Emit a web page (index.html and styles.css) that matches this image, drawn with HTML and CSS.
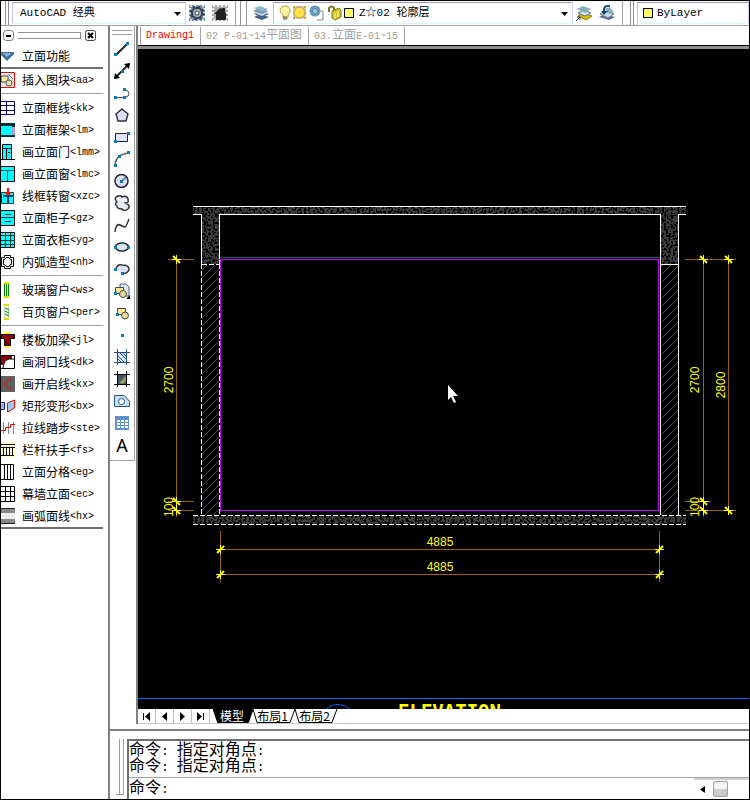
FILE: index.html
```html
<!DOCTYPE html>
<html lang="zh-CN">
<head>
<meta charset="utf-8">
<title>AutoCAD</title>
<link rel="stylesheet" href="styles.css">
</head>
<body>
<header class="topbar">
  <div class="group">
    <span class="grip"></span>
    <div class="combo workspace">
      <select aria-label="工作空间"><option>AutoCAD 经典</option></select>
      <svg class="arrow" width="7" height="4" viewBox="0 0 7 4"><path d="M0 0H7L3.500 4z"/></svg>
    </div>
    <button class="tool" aria-label="设置"><svg width="16" height="16"><path fill="#7394ad" d="M0 0h16v16H0z"/><path stroke="#d3e2e8" stroke-width="2" stroke-dasharray="2 2" d="M1 1h14v14H1z" fill="none"/><circle cx="8" cy="8" r="5" fill="none" stroke="#36414b" stroke-width="2"/><circle cx="8" cy="8" r="6" fill="none" stroke="#36414b" stroke-width="3" stroke-dasharray="2.300 2.410"/><circle cx="8" cy="8" r="4" fill="#9eb5c2"/><circle cx="8" cy="8" r="2" fill="#fff" stroke="#444"/></svg></button>
    <button class="tool" aria-label="我的工作空间"><svg width="16" height="16"><path fill="#a9aaaa" d="M0 0h16v16H0z"/><path stroke="#eee" stroke-width="2" stroke-dasharray="2 2" d="M1 1h14v14H1z" fill="none"/><path d="M2 9L8 3l2 1V3h3v4l2 3h-1v5H4V9z" fill="#222"/></svg></button>
  </div>
  <div class="group">
    <span class="grip wide"></span>
    <button class="tool" aria-label="图层特性"><svg width="16" height="16"><path d="M1 12l6-3 9 3-7 3zM1 9l6-3 9 3-7 3z" fill="#4b5e83"/><path d="M0 7l7-3 9 3-7 4z" fill="#d4e3ef"/><path d="M0 6l7-3 8 3-6 3z" fill="#6d93a9"/><path d="M1 3l6-2 8 3-6 3z" fill="#8db8c4"/></svg></button>
    <div class="combo layer">
      <select aria-label="图层"><option>Z☆02 轮廓层</option></select>
      <svg class="state" width="76" height="16"><path d="M4 10C-1 6 1 1 6 1s7 5 3 9v3H4z" fill="#fff3a0" stroke="#b99a30"/><path d="M4 12h4M4 14h4" stroke="#555"/><path d="M14 1h13v13H14z" fill="#b9d2e7"/><path d="M14 1h2v2h-2zM25 12h2v2h-2zM25 1h2v2h-2zM14 12h2v2h-2z" fill="#d6a919"/><circle cx="20.500" cy="7.500" r="5.500" fill="#ffe047" stroke="#d18e25"/><path d="M36 6h8v9h-6" fill="#fff" stroke="#888"/><circle cx="36" cy="6" r="5.500" fill="#6d9fbb"/><path d="M31 6h10M36 1v10M32 2l8 8M40 2l-8 8" stroke="#35688e" stroke-dasharray="1 1"/><circle cx="36" cy="6" r="2" fill="#a7cbd9"/><path d="M50 7V3q3-3 5 0v4" fill="none" stroke="#77751b" stroke-width="2"/><path d="M53 6l7-3 2 2v7l-6 3-3-2z" fill="#d6c52b" stroke="#827c16"/><path d="M56 8v6M59 6v6" stroke="#fff49b"/><path d="M65.500 3.500h9v9h-9z" fill="#ff6" stroke="#000"/></svg>
      <svg class="arrow" width="7" height="4" viewBox="0 0 7 4"><path d="M0 0H7L3.500 4z"/></svg>
    </div>
    <button class="tool" aria-label="置为当前图层"><svg width="16" height="16"><path d="M2 11l5-3 9 3-6 4z" fill="#d8bd10" stroke="#8d7600"/><path d="M2 8l6-3 7 3-6 3z" fill="#d5e4ed" stroke="#59738a"/><path d="M1 4l6-3 8 3-6 4z" fill="#87afbb"/><path d="M0 16l4-4M1 12h3v3" stroke="#123e66" fill="none"/></svg></button>
    <button class="tool" aria-label="上一个图层"><svg width="16" height="16"><path d="M0 12l6-3 10 3-6 3z" fill="#587096"/><path d="M1 9l6-3 8 3-6 4z" fill="#c9dbe8" stroke="#59738a"/><path d="M6 4l4-2 5 5-5 2z" fill="#87afbb"/><path d="M11 1Q4 0 5 7" stroke="#16436a" stroke-width="2" fill="none"/><path d="M2 6h7l-4 4z" fill="#16436a"/></svg></button>
  </div>
  <div class="group last">
    <span class="grip"></span>
    <div class="combo color">
      <select aria-label="颜色"><option>ByLayer</option></select>
      <span class="swatch"></span>
    </div>
  </div>
</header>

<div class="workarea">
  <aside class="palette">
    <div class="palette-head">
      <button aria-label="折叠"><svg width="11" height="11"><rect x=".5" y=".5" width="10" height="10" rx="3" fill="#fff" stroke="#777"/><path d="M3 5h5v2H3z"/></svg></button>
      <span class="bars"></span>
      <button aria-label="关闭"><svg width="11" height="11"><rect x=".5" y=".5" width="10" height="10" rx="2" fill="#fff" stroke="#444"/><path d="M3 3l5 5M8 3L3 8" stroke="#000" stroke-width="2"/></svg></button>
    </div>
    <button class="item"><svg width="14" height="16"><path d="M0 4h13v2L6 13 0 7z" fill="#426b9c"/><path d="M1 5h10L6 9z" fill="#86aed1"/></svg>立面功能</button>
    <hr class="strong">
    <button class="item"><svg width="14" height="16"><path d="M-1 .5h14.500v15H-1" fill="#dce6ed" stroke="red"/><path d="M0 4h7v6H0z" fill="#ffe69a" stroke="#555"/><circle cx="8" cy="11" r="3" fill="#f5e7a2" stroke="#555"/><path d="M7 2l5 5" stroke="#789"/></svg>插入图块<code>&lt;aa&gt;</code></button>
    <hr>
    <button class="item"><svg width="14" height="16"><path d="M0 1.500h13.500v13H0M0 5.500h13M0 10.500h13M5.500 1v14" fill="none" stroke="#00008b"/></svg>立面框线<code>&lt;kk&gt;</code></button>
    <button class="item"><svg width="14" height="16"><path d="M0 1h14v14H0z" fill="#033"/><path d="M0 4h11v9H0z" fill="#0ff"/><path d="M11 5h3v8h-3z" fill="#a9a2e8"/></svg>立面框架<code>&lt;lm&gt;</code></button>
    <button class="item"><svg width="14" height="16"><path d="M1.500 .5h9v15h-9z" fill="#0ff" stroke="#000"/><path d="M2 4.500h9M5.500 4v11M0 15.500h14M7 8.500h2" stroke="#000"/></svg>画立面门<code>&lt;lmm&gt;</code></button>
    <button class="item"><svg width="14" height="16"><path d="M0 .5h13.500v15H0" fill="#0ff" stroke="#000"/><path d="M0 4.500h13M6.500 4v11" stroke="#055"/></svg>画立面窗<code>&lt;lmc&gt;</code></button>
    <button class="item"><svg width="14" height="16"><path d="M.5 4.500h12v11H.5z" fill="#0ff" stroke="#046"/><path d="M2 8h10M7 5v10" stroke="#046" stroke-width="2"/><path d="M6 0h2v4h3L7 8 3 4h3z" fill="red"/></svg>线框转窗<code>&lt;xzc&gt;</code></button>
    <button class="item"><svg width="14" height="16"><path d="M0 .5h13.500v15H0" fill="#0ff" stroke="#000"/><path d="M0 7.500h14M4 4.500h6M4 11.500h6" stroke="#033"/></svg>立面柜子<code>&lt;gz&gt;</code></button>
    <button class="item"><svg width="14" height="16"><path d="M0 .5h13.500v15H0" fill="#0ff" stroke="#000"/><path d="M0 3.500h14M0 8.500h14M0 12.500h14M4.500 0v16M9.500 0v16" stroke="#033"/></svg>立面衣柜<code>&lt;yg&gt;</code></button>
    <button class="item"><svg width="14" height="16"><path d="M3.500 1.500h6v2h3v9h-3v2h-6v-2h-3v-9h3z" fill="#fff" stroke="#000"/><path d="M5 3.500h3q0 2 2.500 2v5q-2.500 0-2.500 2H5q0-2-2.500-2v-5q2.500 0 2.500-2z" fill="#fff" stroke="#000"/></svg>内弧造型<code>&lt;nh&gt;</code></button>
    <hr>
    <button class="item"><svg width="14" height="16"><path d="M3.500 2v12M5.500 2v12M7.500 2v12" stroke="#080"/><path d="M3 0h5v2H3zM3 14h5v2H3z" fill="#dd0"/></svg>玻璃窗户<code>&lt;ws&gt;</code></button>
    <button class="item"><svg width="14" height="16"><path d="M3.500 1v14M7.500 1v14" stroke="#bfdabf"/><path d="M4 4l4 2M4 7l4 2M4 10l4 2" stroke="#080"/><path d="M3 0h5v2H3zM3 14h5v2H3z" fill="#dd0"/></svg>百页窗户<code>&lt;per&gt;</code></button>
    <hr>
    <button class="item"><svg width="14" height="16"><path d="M0 2.500h13.500v4H9.500v7h-6v-7H0z" fill="#900000" stroke="#000"/><path d="M3 0h6v2H3zM4 14h4v2H4z" fill="#ff0"/></svg>楼板加梁<code>&lt;jl&gt;</code></button>
    <button class="item"><svg width="14" height="16"><path d="M0 1.500h13.500v13H0" fill="#fff" stroke="#000"/><path d="M0 2h11v3H7L4 7 2 11H0z" fill="#900000"/><path d="M13 5H8Q3 6 2 14" fill="none" stroke="#000"/></svg>画洞口线<code>&lt;dk&gt;</code></button>
    <button class="item"><svg width="14" height="16"><path d="M0 0h14v16H0z" fill="#606060"/><path d="M10 2L3 8l7 6" stroke="red" fill="none"/></svg>画开启线<code>&lt;kx&gt;</code></button>
    <button class="item"><svg width="14" height="16"><path d="M0 4.500h3.500v7H0" fill="#9be" stroke="#1616a8"/><path d="M6.500 5l7-3v8l-7 4z" fill="#9ce" stroke="red"/></svg>矩形变形<code>&lt;bx&gt;</code></button>
    <button class="item"><svg width="14" height="16"><path d="M2.500 2v12M7.500 2v12M12.500 2v12" stroke="#888"/><path d="M0 10.500h4.500v-3h5v-3H14" fill="none" stroke="red"/></svg>拉线踏步<code>&lt;ste&gt;</code></button>
    <button class="item"><svg width="14" height="16"><path d="M0 1h14v14H0z" fill="#ffffc8"/><path d="M0 2.500h14M0 5.500h14M0 13.500h13M2.500 5v9M5.500 5v9M8.500 5v9M11.500 5v9" stroke="#000"/></svg>栏杆扶手<code>&lt;fs&gt;</code></button>
    <button class="item"><svg width="14" height="16"><path d="M0 .5h12.500v15H0M3.500 0v16M6.500 0v16M9.500 0v16" fill="#fff" stroke="#000"/></svg>立面分格<code>&lt;eg&gt;</code></button>
    <button class="item"><svg width="14" height="16"><path d="M0 .5h13.500v15H0M0 5.500h14M0 10.500h14M4.500 0v16M9.500 0v16" fill="none" stroke="#000"/></svg>幕墙立面<code>&lt;ec&gt;</code></button>
    <button class="item"><svg width="14" height="16"><path d="M0 0h14v16H0z" fill="#888"/><path d="M0 5h14v6H0z" fill="#eee"/><path d="M0 .5h14M0 15.500h14" stroke="#222"/></svg>画弧面线<code>&lt;hx&gt;</code></button>
    <hr class="strong">
  </aside>

  <div class="right">
    <div class="upper">
      <nav class="draw" aria-label="绘图">
        <span class="draw-grip"></span>
        <button aria-label="直线"><svg width="16" height="16"><path d="M2 14L14 2" stroke="#222" stroke-width="2"/><path d="M0 12h3v3H0zM12 1h3v3h-3z" class="node"/></svg></button>
        <button aria-label="构造线"><svg width="16" height="16"><path d="M1 15L15 1" stroke="#222" stroke-width="2"/><path d="M0 16l1-6 5 5zM16 0l-6 1 5 5z"/><path d="M7 7h3v3H7z" class="node"/></svg></button>
        <button aria-label="多段线"><svg width="16" height="16"><path d="M1 12.500h10q4-1 4-4t-5-4" fill="none" stroke="#444"/><path d="M0 11h3v3H0zM9 11h3v3H9zM9 3h3v3H9z" class="node"/></svg></button>
        <button aria-label="多边形"><svg width="16" height="16"><path d="M8 2l6 5-2 7H4L2 7z" fill="#d9dff5" stroke="#334" stroke-width="1.500"/></svg></button>
        <button aria-label="矩形"><svg width="16" height="16"><path d="M1.500 4.500h12v8h-12z" fill="#dfe3fb" stroke="#222"/><path d="M0 11h3v3H0zM13 3h3v3h-3z" class="node"/></svg></button>
        <button aria-label="圆弧"><svg width="16" height="16"><path d="M1 14Q2 3 15 2" fill="none" stroke="#555" stroke-width="1.500"/><path d="M0 13h3v3H0zM4 4h3v3H4zM13 0h3v3h-3z" class="node"/></svg></button>
        <button aria-label="圆"><svg width="16" height="16"><circle cx="7.500" cy="8" r="6.500" fill="#dce0f5" stroke="#223" stroke-width="1.500"/><path d="M8 8l4-4" stroke="#27a" stroke-width="1.500"/><path d="M6 7h3v3H6z" class="node"/></svg></button>
        <button aria-label="修订云线"><svg width="16" height="16"><path d="M3 7Q-1 3 4 1q3-1 4 1 5-2 6 2t-2 4q5 3 2 6-4 3-6 0-5 0-5-3-3-2 0-4z" fill="#e8eaf6" stroke="#333" stroke-width="1.500"/></svg></button>
        <button aria-label="样条曲线"><svg width="16" height="16"><path d="M1 15Q2 6 6 8t5 2 4-8" fill="none" stroke="#333" stroke-width="1.500"/></svg></button>
        <button aria-label="椭圆"><svg width="16" height="16"><ellipse cx="8" cy="8" rx="6.500" ry="4" fill="#dde1f4" stroke="#222" stroke-width="1.500"/><path d="M0 7h3v3H0zM13 7h3v3h-3zM7 3h3v2H7zM7 11h3v2H7z" class="node"/></svg></button>
        <button aria-label="椭圆弧"><svg width="16" height="16"><path d="M2 8Q3 3 8 4q7 0 7 4t-7 5" fill="#dde1f4" stroke="#333" stroke-width="1.500"/><path d="M0 7h3v3H0zM7 11h3v3H7z" class="node"/></svg></button>
        <button aria-label="插入块"><svg width="16" height="16"><path d="M6 1h6l3 3v9H6z" fill="#d9e6f5" stroke="#567"/><path d="M1.500 4.500h8v6h-8z" fill="#ffeaa0" stroke="#543"/><circle cx="9" cy="11" r="3.500" fill="#e7dca0" stroke="#543"/><path d="M16 12v4h-4z"/><path d="M0 9h3v3H0z" class="node"/></svg></button>
        <button aria-label="创建块"><svg width="16" height="16"><path d="M3.500 3.500h8v6h-8z" fill="#ffeaa0" stroke="#543"/><circle cx="11" cy="10.500" r="3.500" fill="#e7dca0" stroke="#543"/><path d="M2 8h3v3H2z" class="node"/></svg></button>
        <button aria-label="点"><svg width="16" height="16"><path d="M7 7h3v3H7z" class="node"/></svg></button>
        <button aria-label="图案填充"><svg width="16" height="16"><path d="M4 4h9v9H4z" fill="#dce7ff"/><path d="M3 6l7 7M3 9l4 4M6 4l7 7M9 4l4 4M0 3.500h16M0 13.500h16M3.500 0v16M12.500 0v16" stroke="#234c89"/></svg></button>
        <button aria-label="渐变色"><svg width="16" height="16"><path d="M3 4h10v9H3z" fill="#456"/><path d="M5 12l8-8v5l-4 4z" fill="#a39a5c"/><path d="M0 3.500h16M0 13.500h16M3.500 0v16M12.500 0v16" stroke="#000" stroke-width="1"/></svg></button>
        <button aria-label="面域"><svg width="16" height="16"><path d="M.5 2.500h10l5 6v5H.5z" fill="#c8e1f5" stroke="#25548a"/><circle cx="7.500" cy="8.500" r="3" fill="#fff" stroke="#25548a"/></svg></button>
        <button aria-label="表格"><svg width="16" height="16"><path d="M1 1h14v14H1z" fill="#6190d0"/><path d="M3 5h3v2H3zM7 5h3v2H7zM11 5h3v2h-3zM3 8h3v2H3zM7 8h3v2H7zM11 8h3v2h-3zM3 11h3v2H3zM7 11h3v2H7zM11 11h3v2h-3z" fill="#fff"/></svg></button>
        <button class="letter" aria-label="多行文字">A</button>
      </nav>

      <main class="document">
        <div class="files">
          <button class="active">Drawing1</button>
          <button>02 P-01~14<span>平面图</span></button>
          <button>03.<span>立面</span>E-01~15</button>
        </div>
        <div class="canvas">
          <svg width="611" height="659" viewBox="138 50 611 659">
            <defs>
              <pattern id="hatch" width="8" height="8" patternUnits="userSpaceOnUse"><path d="M-1 9L9 -1M-1 1L1 -1M7 9L9 7" stroke="#444" stroke-width="1"/></pattern>
              <filter id="concrete" x="0" y="0" width="1" height="1" color-interpolation-filters="sRGB"><feTurbulence type="fractalNoise" baseFrequency=".45" numOctaves="1" seed="4"/><feColorMatrix values="0 0 0 0 .24  0 0 0 0 .24  0 0 0 0 .24  0 0 0 18 -8"/></filter>
              <g id="tick" stroke="#ff0"><path d="M-4 .5H5M.5 -4V5"/><path d="M-3 -3L4 4" stroke-width="2"/></g>
              <g id="tickb" stroke="#ff0"><path d="M-4 .5H5M.5 -4V5"/><path d="M-3 4L4 -3" stroke-width="2"/></g>
            </defs>
            <g filter="url(#concrete)"><path d="M193 207h493v7H193z"/></g>
            <g filter="url(#concrete)"><path d="M202 214h17v50h-17z"/></g>
            <g filter="url(#concrete)"><path d="M661 214h17v50h-17z"/></g>
            <g filter="url(#concrete)"><path d="M193 516h493v8H193z"/></g>
            <path d="M202 265h17v250h-17zM661 265h17v250h-17z" fill="url(#hatch)"/>
            <g fill="none" stroke="#fff" shape-rendering="crispEdges">
              <path d="M193 206.500H686M193 214.500h9M219 214.500H661M678 214.500h8M201.500 214v50M219.500 214v50M660.500 214v301M678.500 214v301M661 264.500h17"/>
              <path d="M201.500 264v251M219.500 264v251M202 264.500h17M193 515.500H686M193 524.500H686" stroke-dasharray="5 2"/>
            </g>
            <path d="M220 257.500H660" stroke="#066" shape-rendering="crispEdges"/>
            <path d="M219 259.500H660M220.500 260v250M658.500 260v250M220 510.500H660" fill="none" stroke="#c800ff" shape-rendering="crispEdges"/>
            <path d="M168 259.500h26M176.500 255v262M168 501.500h26M168 510.500h26M685 259.500h51M703.500 255v262M728.500 255v259M685 501.500h26M685 510.500h51M220.500 531v51M659.500 531v51M216 549.500h447M216 574.500h447" fill="none" stroke="#9c6300" shape-rendering="crispEdges"/>
            <use href="#tick" x="176" y="259"/><use href="#tick" x="176" y="501"/><use href="#tick" x="176" y="510"/>
            <use href="#tick" x="703" y="259"/><use href="#tick" x="703" y="501"/><use href="#tick" x="703" y="510"/>
            <use href="#tick" x="728" y="259"/><use href="#tick" x="728" y="510"/>
            <use href="#tickb" x="220" y="549"/><use href="#tickb" x="659" y="549"/><use href="#tickb" x="220" y="574"/><use href="#tickb" x="659" y="574"/>
            <g class="dim">
              <text x="440" y="546">4885</text><text x="440" y="571">4885</text>
              <text transform="translate(173 380) rotate(-90)">2700</text>
              <text transform="translate(173 507) rotate(-90)">100</text>
              <text transform="translate(699 380) rotate(-90)">2700</text>
              <text transform="translate(699 507) rotate(-90)">100</text>
              <text transform="translate(725 385) rotate(-90)">2800</text>
            </g>
            <path d="M138 698.500H749" stroke="#0060ff"/>
            <circle cx="338" cy="721.500" r="17" fill="none" stroke="#0060ff"/>
            <text class="title" x="398" y="718">ELEVATION</text>
            <path d="M448 385v15l3-3 3 6 2-1-3-6h5z" fill="#fff"/>
          </svg>
        </div>
        <div class="layouts">
          <button class="nav" aria-label="第一个"><svg width="9" height="9"><path d="M1 1h1v7H1zM8 0v9L3 4.500z"/></svg></button>
          <button class="nav" aria-label="上一个"><svg width="9" height="9"><path d="M7 0v9L2 4.500z"/></svg></button>
          <button class="nav" aria-label="下一个"><svg width="9" height="9"><path d="M2 0v9l5-4.500z"/></svg></button>
          <button class="nav" aria-label="最后一个"><svg width="9" height="9"><path d="M7 1h1v7H7zM1 0v9l5-4.500z"/></svg></button>
          <button class="sheet current"><svg viewBox="0 0 44 14" preserveAspectRatio="none"><path d="M0 0l5 13.500h33L43 0z"/></svg><span>模型</span></button>
          <button class="sheet"><svg viewBox="0 0 44 14" preserveAspectRatio="none"><path d="M1 0l4 13.500h33L43 0"/></svg><span>布局1</span></button>
          <button class="sheet"><svg viewBox="0 0 44 14" preserveAspectRatio="none"><path d="M1 0l4 13.500h33L43 0"/></svg><span>布局2</span></button>
        </div>
      </main>
    </div>

    <section class="command">
      <span class="command-grip"></span>
      <div class="console">
        <div class="history">
          <p>命令<code>: </code>指定对角点<code>:</code></p>
          <p>命令<code>: </code>指定对角点<code>:</code></p>
        </div>
        <div class="prompt">
          <label for="cmd">命令<code>:</code></label>
          <input id="cmd" type="text">
          <div class="scroll">
            <button aria-label="向左滚动"><svg width="5" height="7"><path d="M5 0v7L0 3.500z"/></svg></button>
            <span class="thumb"></span>
          </div>
        </div>
      </div>
    </section>
  </div>
</div>
</body>
</html>
```
FILE: styles.css
```css
* { box-sizing: border-box; }
body {
  margin: 0;
  min-height: 100vh;
  border: 1px solid #000;
  background: #fff;
  color: #000;
  display: flex;
  flex-direction: column;
  overflow: hidden;
  font: 12px/14px "Noto Sans CJK SC", sans-serif;
}
button {
  margin: 0;
  padding: 0;
  border: 0;
  background: none;
  color: inherit;
  font: inherit;
}
svg { display: block; flex: none; }
code { font: 10px/14px "Liberation Mono", monospace; white-space: pre; }

.topbar { display: flex; height: 25px; border-bottom: 1px solid #a0a0a0; }
.group {
  display: flex;
  align-items: center;
  flex: none;
  padding-right: 7px;
  border-right: 1px solid #a0a0a0;
  margin-left: 4px;
}
.group.last { flex: 1; min-width: 0; padding-right: 0; border-right: 0; margin-left: 7px; }
.grip {
  align-self: stretch;
  width: 4px;
  margin-right: 3px;
  border: solid #909090;
  border-width: 0 1px;
}
.grip.wide { width: 7px; }
.combo {
  position: relative;
  height: 22px;
  border: 1px solid;
  border-color: #a294cf #d5ceff #cffcfc #c5bcf2;
}
.workspace { width: 174px; }
.layer { width: 300px; margin-left: 4px; }
.color { flex: 1; min-width: 0; }
.combo select {
  display: block;
  width: 100%;
  height: 20px;
  padding: 0 16px 0 7px;
  border: 0;
  appearance: none;
  background: #fff;
  color: #000;
  font: 11px/20px "Liberation Mono", "Noto Sans CJK SC", monospace;
}
.layer select { padding-left: 85px; }
.color select { padding-left: 19px; }
.arrow { position: absolute; right: 4px; top: 9px; }
.state { position: absolute; left: 5px; top: 2px; }
.swatch {
  position: absolute;
  left: 5px;
  top: 5px;
  width: 10px;
  height: 10px;
  background: #ff6;
  border: 1px solid #000;
}
.tool { margin-left: 3px; }
.tool + .tool { margin-left: 7px; }

.workarea { display: flex; flex: 1; min-height: 0; }
.palette {
  width: 109px;
  flex: none;
  border-right: 2px solid #808080;
  padding-right: 5px;
}
.palette-head { display: flex; align-items: center; gap: 4px; height: 19px; padding: 0 7px 0 2px; }
.bars { flex: 1; height: 7px; border: 1px solid #909090; border-left: 0; }
.item {
  display: flex;
  align-items: center;
  width: 100%;
  height: 22px;
  white-space: nowrap;
}
.item svg { margin-right: 7px; }
.item code { padding-top: 2px; }
.palette hr { margin: 2px 0 3px; border: 0; height: 1px; background: #a0a0a0; }
.palette hr.strong { margin: 0; height: 2px; background: #707070; }

.right { flex: 1; min-width: 0; display: flex; flex-direction: column; }
.upper { flex: 1; min-height: 0; display: flex; border-bottom: 2px solid #808080; }
.draw {
  width: 25px;
  flex: none;
  align-self: flex-start;
  display: flex;
  flex-direction: column;
  align-items: center;
  padding: 4px 0;
  border: solid #a0a0a0;
  border-width: 0 1px 1px 0;
}
.draw-grip { width: 20px; height: 5px; margin-bottom: 3px; border: solid #a0a0a0; border-width: 1px 0; }
.draw button { width: 16px; height: 22px; display: flex; align-items: center; justify-content: center; }
.node { fill: #087cb4; }
.draw .letter { font: 18px/22px "Noto Sans", sans-serif; }

.document {
  flex: 1;
  min-width: 0;
  display: flex;
  flex-direction: column;
  margin: 0 0 5px 1px;
  border-left: 2px solid #808080;
}
.files { display: flex; height: 20px; padding: 1px 0 0 2px; }
.files button {
  height: 18px;
  padding: 0 6px 0 5px;
  border-right: 1px solid #a0a0a0;
  color: #a0a0a0;
  font: 10px/18px "Liberation Mono", "Noto Sans CJK SC", monospace;
  white-space: nowrap;
}
.files span { font-size: 12px; vertical-align: middle; }
.files .active { color: #f00; border-left: 1px solid #a0a0a0; }
.canvas {
  flex: 1;
  min-height: 0;
  overflow: hidden;
  background: #000;
  border-top: 3px solid #909090;
  box-shadow: 0 -1px #000;
  padding-top: 1px;
}
.dim text { fill: #ff0; font: 12px "Liberation Sans", sans-serif; text-anchor: middle; }
.title { fill: #ff0; font: bold 19px "DejaVu Sans Mono", monospace; }
.layouts { display: flex; height: 15px; border-bottom: 1px solid #c8c8c8; }
.nav {
  width: 18px;
  height: 14px;
  display: flex;
  align-items: center;
  justify-content: center;
  border-right: 1px solid #c0c0c0;
}
.sheet { position: relative; width: 44px; height: 14px; padding-right: 3px; margin-right: -2px; }
.sheet.current { width: 41px; }
.nav + .sheet { margin-left: 3px; }
.sheet svg { position: absolute; left: 0; top: 0; width: 100%; height: 100%; fill: #fff; stroke: #000; }
.sheet span { position: relative; line-height: 12px; display: block; }
.current { color: #fff; }
.sheet.current svg { fill: #000; }

.command { display: flex; height: 68px; padding: 8px 0 0 6px; }
.command-grip {
  width: 8px;
  margin-bottom: 4px;
  margin-right: 3px;
  border: solid #a0a0a0;
  border-width: 0 1px 1px 0;
  position: relative;
}
.command-grip::before {
  content: "";
  position: absolute;
  right: 3px;
  top: 0;
  bottom: 0;
  border-left: 1px solid #a0a0a0;
}
.console {
  flex: 1;
  min-width: 0;
  border: solid #707070;
  border-width: 2px 0 0 2px;
  font-size: 16px;
  line-height: 16px;
}
.console code { font-size: 13px; line-height: 16px; }
.history { height: 37px; border-bottom: 1px solid #a0a0a0; }
.history p { margin: 0; height: 16px; line-height: 15px; }
.history code { line-height: 15px; }
.prompt { display: flex; height: 20px; align-items: center; }
.prompt input { flex: 1; min-width: 0; height: 18px; border: 0; padding: 0 4px; background: #fff; font: inherit; }
.scroll {
  display: flex;
  align-items: center;
  gap: 8px;
  width: 55px;
  height: 20px;
  padding-left: 6px;
  border-top: 2px solid #d0d0d0;
}
.thumb { width: 15px; height: 16px; border: 1px solid #a0a0a0; border-radius: 2px; background: linear-gradient(#f4f4f4 50%, #ccc 50%); }
```
